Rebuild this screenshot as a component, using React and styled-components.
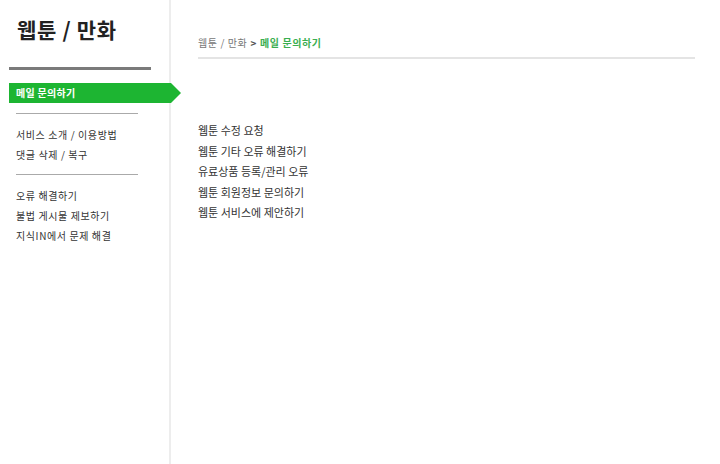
import React from "react";
import styled, { createGlobalStyle } from "styled-components";

const Global = createGlobalStyle`
  html, body { margin: 0; padding: 0; background: #fff; }
  body { font-family: "Noto Sans CJK KR", "Noto Sans", sans-serif; color: #333; }
`;

const Page = styled.div`
  display: flex;
  height: 464px;
  width: 720px;
  overflow: hidden;
`;

const Sidebar = styled.aside`
  width: 169px;
  flex: none;
  border-right: 2px solid #ededed;
  display: flex;
  flex-direction: column;
  position: relative;
  z-index: 1;
`;

const Title = styled.h1`
  margin: 16px 0 0 17px;
  font-size: 21px;
  line-height: 26px;
  font-weight: 700;
  color: #222;
  letter-spacing: 0.7px;
`;

const Bar = styled.div`
  margin: 25px 0 0 9px;
  width: 142px;
  height: 3px;
  background: #7a7a7a;
`;

const Active = styled.div`
  position: relative;
  margin: 13px 0 0 9px;
  width: 162px;
  height: 20px;
  background: #1db532;
  color: #fff;
  font-size: 10px;
  font-weight: 700;
  line-height: 20px;
  padding-left: 7px;
  letter-spacing: 0.3px;
  box-sizing: border-box;
  &::after {
    content: "";
    position: absolute;
    left: 100%;
    top: 0;
    border-left: 10px solid #1db532;
    border-top: 10px solid transparent;
    border-bottom: 10px solid transparent;
  }
`;

const Rule = styled.div`
  margin: ${(p) => p.$top}px 0 0 16px;
  width: 122px;
  height: 1px;
  background: #aaa;
`;

const Group = styled.ul`
  list-style: none;
  margin: 11px 0 0 16px;
  padding: 0;
`;

const Item = styled.li`
  font-size: 10px;
  line-height: 20px;
  letter-spacing: 0.6px;
  color: #333;
  white-space: nowrap;
`;

const Main = styled.main`
  flex: 1;
  padding-left: 27px;
  padding-right: 25px;
  display: flex;
  flex-direction: column;
`;

const Crumbs = styled.div`
  margin-top: 35px;
  font-size: 10px;
  line-height: 16px;
  color: #777;
  letter-spacing: 0.6px;
  display: flex;
  align-items: center;
  gap: 3px;
`;

const Sep = styled.span`
  color: #555;
  font-weight: 700;
  font-size: 10px;
`;

const Current = styled.span`
  color: #3aae4f;
  font-weight: 700;
`;

const HLine = styled.div`
  margin-top: 6px;
  height: 2px;
  background: #e4e4e4;
`;

const List = styled.ul`
  list-style: none;
  margin: 61px 0 0 0;
  padding: 0;
`;

const ListItem = styled.li`
  font-size: 11px;
  line-height: 20.5px;
  color: #333;
`;

export default function App() {
  return (
    <>
      <Global />
      <Page>
        <Sidebar>
          <Title>웹툰 / 만화</Title>
          <Bar />
          <Active>메일 문의하기</Active>
          <Rule $top={10} />
          <Group>
            <Item>서비스 소개 / 이용방법</Item>
            <Item>댓글 삭제 / 복구</Item>
          </Group>
          <Rule $top={9} />
          <Group>
            <Item>오류 해결하기</Item>
            <Item>불법 게시물 제보하기</Item>
            <Item>지식IN에서 문제 해결</Item>
          </Group>
        </Sidebar>
        <Main>
          <Crumbs>
            <span>웹툰 / 만화</span>
            <Sep>&gt;</Sep>
            <Current>메일 문의하기</Current>
          </Crumbs>
          <HLine />
          <List>
            <ListItem>웹툰 수정 요청</ListItem>
            <ListItem>웹툰 기타 오류 해결하기</ListItem>
            <ListItem>유료상품 등록/관리 오류</ListItem>
            <ListItem>웹툰 회원정보 문의하기</ListItem>
            <ListItem>웹툰 서비스에 제안하기</ListItem>
          </List>
        </Main>
      </Page>
    </>
  );
}
